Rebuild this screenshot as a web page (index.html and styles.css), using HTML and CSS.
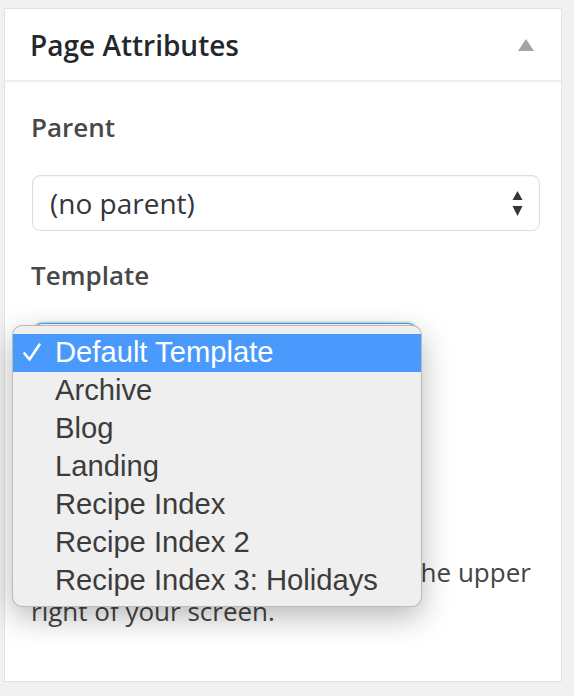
FILE: index.html
```html
<!DOCTYPE html>
<html>
<head>
<meta charset="utf-8">
<link rel="stylesheet" href="styles.css">
</head>
<body>
<div class="postbox">
  <div class="hndle">
    <h2 class="title">Page Attributes</h2>
    <span class="toggle"></span>
  </div>
  <div class="inside">
    <p class="label">Parent</p>
    <div class="select">
      <span class="select-text">(no parent)</span>
      <svg class="arrows" width="11" height="26" viewBox="0 0 11 26"><path d="M5.5 0 L10.5 9 L0.5 9 Z" fill="#32373c"/><path d="M0.5 15 L10.5 15 L5.5 25 Z" fill="#32373c"/></svg>
    </div>
    <p class="label">Template</p>
    <div class="select select-template focused">
      <span class="select-text">Default Template</span>
    </div>
    <p class="label">Order</p>
    <div class="select select-order"><span class="select-text">0</span></div>
    <p class="help">Need help? Use the Help tab in the upper right of your screen.</p>

    <div class="menu">
      <div class="item selected">
        <svg class="check" width="18" height="19" viewBox="0 0 18 19"><path d="M1.5 10.5 L6.5 16.5 L16.5 1.5" fill="none" stroke="#fff" stroke-width="2.6" stroke-linecap="round" stroke-linejoin="round"/></svg>
        Default Template</div>
      <div class="item">Archive</div>
      <div class="item">Blog</div>
      <div class="item">Landing</div>
      <div class="item">Recipe Index</div>
      <div class="item">Recipe Index 2</div>
      <div class="item">Recipe Index 3: Holidays</div>
    </div>
  </div>
</div>
</body>
</html>
```

FILE: styles.css
```css
html, body {
  margin: 0;
  padding: 0;
  background: #f1f1f1;
}
body {
  padding: 8px 0 0 4px;
  font-family: "Open Sans", "Noto Sans", sans-serif;
}
.postbox {
  position: relative;
  width: 556px;
  height: 672px;
  background: #fff;
  border: 1px solid #e2e2e2;
  box-shadow: 0 1px 1px rgba(0,0,0,0.04);
}
.hndle {
  display: flex;
  align-items: center;
  justify-content: space-between;
  height: 71px;
  padding: 0 27px 0 25px;
  border-bottom: 2px solid #eeeeee;
}
.title {
  margin: 0;
  font-size: 28px;
  font-weight: 600;
  line-height: 40px;
  color: #23282d;
  padding-top: 1px;
}
.toggle {
  width: 0;
  height: 0;
  border-left: 8px solid transparent;
  border-right: 8px solid transparent;
  border-bottom: 12px solid #a0a5aa;
  margin-top: 1px;
}
.inside {
  padding: 25px 22px 0 26px;
}
.label {
  margin: 0 0 28px;
  font-size: 26px;
  font-weight: 600;
  line-height: 40px;
  color: #484848;
}
.select {
  box-sizing: border-box;
  display: flex;
  align-items: center;
  justify-content: space-between;
  width: 508px;
  height: 56px;
  margin: 0 0 24px 1px;
  padding: 0 16px 0 17px;
  border: 1px solid #dddddd;
  border-radius: 8px;
  box-shadow: inset 0 1px 2px rgba(0,0,0,0.05);
  background: #fff;
}
.select-text {
  font-size: 28px;
  color: #32373c;
}
.arrows {
  display: block;
  margin-top: 1px;
}
.select-template {
  width: 382px;
  margin-left: 3px;
}
.focused {
  border-color: #5b9dd9;
  box-shadow: 0 0 3px rgba(30,140,190,0.8);
}
.select-order {
  width: 140px;
}
.help {
  margin: 26px 0 0;
  font-size: 26px;
  line-height: 39px;
  color: #444;
}
.menu {
  position: absolute;
  left: 7px;
  top: 316px;
  box-sizing: border-box;
  width: 410px;
  height: 282px;
  padding: 8px 0 6px;
  background: #efefef;
  border: 1px solid rgba(0,0,0,0.22);
  border-radius: 10px;
  box-shadow: 0 10px 30px rgba(0,0,0,0.28);
  font-family: "Liberation Sans", Arial, sans-serif;
}
.item {
  position: relative;
  height: 38px;
  line-height: 36px;
  padding-left: 42px;
  font-size: 29.2px;
  color: #3c3c3c;
  white-space: nowrap;
}
.item.selected {
  background: #4a99fc;
  color: #fff;
}
.check {
  position: absolute;
  left: 10px;
  top: 9px;
}
```
